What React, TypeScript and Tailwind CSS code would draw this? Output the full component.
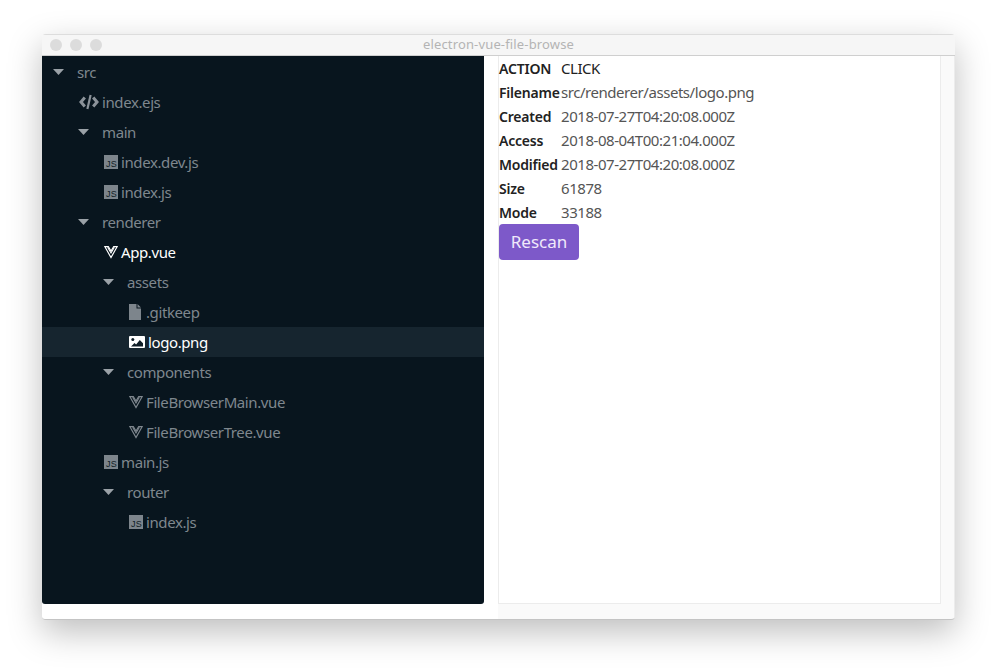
import React from 'react';

type Kind = 'folder' | 'js' | 'vue' | 'code' | 'file' | 'image';

type Row = { name: string; kind: Kind; depth: number; active?: boolean; selected?: boolean };

const rows: Row[] = [
  { name: 'src', kind: 'folder', depth: 0 },
  { name: 'index.ejs', kind: 'code', depth: 1 },
  { name: 'main', kind: 'folder', depth: 1 },
  { name: 'index.dev.js', kind: 'js', depth: 2 },
  { name: 'index.js', kind: 'js', depth: 2 },
  { name: 'renderer', kind: 'folder', depth: 1 },
  { name: 'App.vue', kind: 'vue', depth: 2, active: true },
  { name: 'assets', kind: 'folder', depth: 2 },
  { name: '.gitkeep', kind: 'file', depth: 3 },
  { name: 'logo.png', kind: 'image', depth: 3, active: true, selected: true },
  { name: 'components', kind: 'folder', depth: 2 },
  { name: 'FileBrowserMain.vue', kind: 'vue', depth: 3 },
  { name: 'FileBrowserTree.vue', kind: 'vue', depth: 3 },
  { name: 'main.js', kind: 'js', depth: 2 },
  { name: 'router', kind: 'folder', depth: 2 },
  { name: 'index.js', kind: 'js', depth: 3 },
];

const details = [
  ['ACTION', 'CLICK'],
  ['Filename', 'src/renderer/assets/logo.png'],
  ['Created', '2018-07-27T04:20:08.000Z'],
  ['Access', '2018-08-04T00:21:04.000Z'],
  ['Modified', '2018-07-27T04:20:08.000Z'],
  ['Size', '61878'],
  ['Mode', '33188'],
];

function RowIcon({ kind }: { kind: Kind }) {
  if (kind === 'folder') {
    return (
      <svg width="11" height="6" viewBox="0 0 11 6" className="mr-[13px] shrink-0 fill-[#9aa1a7]">
        <path d="M0 0h11L5.5 6z" />
      </svg>
    );
  }
  if (kind === 'code') {
    return (
      <svg width="20" height="16" viewBox="0 0 20 16" className="mr-[3px] shrink-0 fill-none stroke-[#8b9299]">
        <path d="M5.8 3.6 2 8l3.8 4.4M14.2 3.6 18 8l-3.8 4.4" strokeWidth="3" />
        <path d="M11.6 1 8.4 15" strokeWidth="2.2" />
      </svg>
    );
  }
  if (kind === 'js') {
    return (
      <span className="mr-[3px] flex h-[14px] w-[14px] shrink-0 items-end justify-end bg-[#7d858c] pr-px font-['Liberation_Sans',sans-serif] text-[9px] leading-[10px] tracking-[0.3px] text-[#0f1c25]">
        JS
      </span>
    );
  }
  if (kind === 'vue') {
    return (
      <svg width="14" height="13" viewBox="0 0 14 13" className="mr-[3px] shrink-0 fill-none stroke-current">
        <path d="M.9.7h3.4L7 5l2.7-4.3h3.4L7 11.6z" strokeWidth="1.2" />
        <path d="M3.6 1.2 7 7l3.4-5.8" strokeWidth="1.1" />
      </svg>
    );
  }
  if (kind === 'file') {
    return (
      <svg width="12" height="16" viewBox="0 0 12 16" className="mr-[5px] shrink-0 fill-[#7d858c]">
        <path d="M0 0h7.5v4.5H12V16H0zM8.5 0 12 3.5H8.5z" />
      </svg>
    );
  }
  return (
    <svg width="16" height="12" viewBox="0 0 16 12" className="mr-[3px] shrink-0">
      <rect width="16" height="12" rx="1" fill="#fff" />
      <circle cx="3.8" cy="3.4" r="1.5" fill="#0f1d27" />
      <path d="M2 10.5 5.5 7l1.6 1.4L10.8 4 14 7.2v3.3z" fill="#0f1d27" />
    </svg>
  );
}

export default function App() {
  return (
    <div className="min-h-[669px] bg-white pt-[34px] pl-[42px] font-['Noto_Sans',sans-serif]">
      <div className="flex h-[586px] w-[913px] flex-col overflow-hidden rounded-[4px] border-b border-[#c4c4c4] bg-[#fafafa] shadow-[0_12px_34px_rgba(0,0,0,0.26)]">
        <div className="relative flex h-[22px] shrink-0 items-center justify-center border-t border-b border-t-[#dddddd] border-b-[#cfcfcf] bg-[#f6f6f6]">
          <div className="absolute top-[4px] left-[8px] flex gap-[8px]">
            <span className="h-3 w-3 rounded-full bg-[#dcdcdc]" />
            <span className="h-3 w-3 rounded-full bg-[#dcdcdc]" />
            <span className="h-3 w-3 rounded-full bg-[#dcdcdc]" />
          </div>
          <span className="text-[13px] tracking-[0.15px] text-[#b4b4b4]">electron-vue-file-browse</span>
        </div>

        <div className="flex min-h-0 flex-1">
          <div className="flex w-[456px] shrink-0 flex-col bg-white">
            <div className="mr-[14px] flex h-[548px] flex-col rounded-b-[3px] bg-[#08151e] pt-px text-[15px] tracking-[-0.4px]">
              {rows.map((row, i) => (
                <div
                  key={i}
                  className={`flex h-[30px] items-center ${row.selected ? 'bg-[#16252f]' : ''} ${row.active ? 'text-white' : 'text-[#7f878e]'}`}
                  style={{ paddingLeft: (row.kind === 'folder' ? 11 : 12) + row.depth * 25 }}
                >
                  <RowIcon kind={row.kind} />
                  <span>{row.name}</span>
                </div>
              ))}
            </div>
          </div>

          <div className="flex flex-1 flex-col">
            <div className="flex flex-1">
              <div className="h-[548px] w-[443px] border-r border-b border-l border-[#ececec] bg-white text-[15px] text-[#2f2f2f]">
                {details.map(([label, value]) => (
                  <div key={label} className="flex h-6 items-center">
                    <span className="w-[62px] shrink-0 text-[14px] font-semibold tracking-[-0.2px] whitespace-nowrap text-[#222]">{label}</span>
                    <span className={`tracking-[-0.45px] ${label === 'ACTION' ? 'text-[#222]' : 'text-[#555]'}`}>{value}</span>
                  </div>
                ))}
                <button className="h-9 w-20 rounded-[4px] bg-[#7d59c9] text-[17px] text-[#f0e9fb]">Rescan</button>
              </div>
              <div className="flex-1 border-r border-[#ececec]" />
            </div>
          </div>
        </div>
      </div>
    </div>
  );
}
